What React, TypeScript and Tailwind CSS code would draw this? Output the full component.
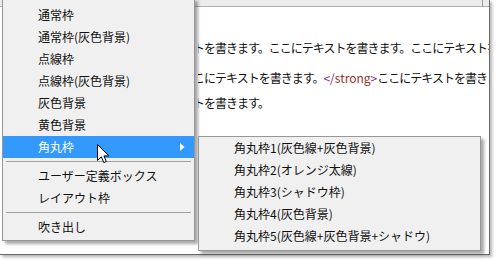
import React from "react";

const mainItems = [
  "通常枠",
  "通常枠(灰色背景)",
  "点線枠",
  "点線枠(灰色背景)",
  "灰色背景",
  "黄色背景",
];

const subItems = [
  "角丸枠1(灰色線+灰色背景)",
  "角丸枠2(オレンジ太線)",
  "角丸枠3(シャドウ枠)",
  "角丸枠4(灰色背景)",
  "角丸枠5(灰色線+灰色背景+シャドウ)",
];

const menuFont = { fontFamily: '"Noto Sans CJK JP", "Noto Sans", sans-serif' };

function Separator() {
  return (
    <div className="flex h-[7px] items-center px-[3px]">
      <div className="h-px w-full bg-[#a0a0a0]" />
    </div>
  );
}

function Cursor() {
  return (
    <svg width="13" height="20" viewBox="0 0 13 20" className="absolute left-[97px] top-[144px]">
      <path
        d="M0.5 0.5 L0.5 16.5 L4.3 12.8 L6.8 18.6 L9.3 17.5 L6.9 11.9 L12 11.9 Z"
        fill="#fff"
        stroke="#000"
        strokeWidth="1"
        strokeLinejoin="round"
      />
    </svg>
  );
}

export default function App() {
  return (
    <div className="relative h-[260px] w-[496px] overflow-hidden bg-white" style={menuFont}>
      {/* underlying window */}
      <div className="flex h-[255px] w-[490px] flex-col border-b border-r border-[#6a6a6a] shadow-[2px_2px_3px_rgba(0,0,0,0.3)]">
        <div className="flex h-[7px] justify-end border-b border-[#b0b0b0] bg-[#ececec]">
          <div className="mr-[6px] h-full w-px bg-[#9a9a9a]" />
        </div>
        <div className="flex flex-1">
          <div className="w-[198px] bg-white" />
          <div className="flex-1 overflow-hidden bg-white pt-[28px] text-[12px] leading-[25px] tracking-[-1px] text-[#111]">
            <div className="ml-[-5px] whitespace-nowrap">
              トを書きます。ここにテキストを書きます。ここにテキストを書きます。
            </div>
            <div className="ml-[-5px] mt-[5px] whitespace-nowrap">
              こにテキストを書きます。
              <span className="tracking-normal">
                <span className="text-[#7a2c8c]">&lt;/</span>
                <span className="text-[#993322]">strong</span>
                <span className="text-[#7a2c8c]">&gt;</span>
              </span>
              ここにテキストを書きます。
            </div>
            <div className="ml-[-5px] whitespace-nowrap">トを書きます。</div>
          </div>
        </div>
      </div>

      {/* main context menu */}
      <div className="absolute left-[2px] top-[-2px] w-[193px] border border-[#979797] bg-[#f0f0f0] pb-[2px] pt-[5px] text-[12px] text-[#111] shadow-[3px_3px_3px_rgba(0,0,0,0.35)]">
        {mainItems.map((t) => (
          <div key={t} className="flex h-[22px] items-center pl-[35px]">
            {t}
          </div>
        ))}
        <div className="flex h-[22px] items-center justify-between bg-[#3399ff] pl-[35px] pr-[9px] text-white">
          <span>角丸枠</span>
          <svg width="5" height="8" viewBox="0 0 5 8">
            <path d="M0 0 L4.5 4 L0 8 Z" fill="#fff" />
          </svg>
        </div>
        <Separator />
        <div className="flex h-[22px] items-center pl-[35px]">ユーザー定義ボックス</div>
        <div className="flex h-[22px] items-center pl-[35px]">レイアウト枠</div>
        <Separator />
        <div className="flex h-[22px] items-center pl-[35px]">吹き出し</div>
      </div>

      {/* submenu */}
      <div className="absolute left-[198px] top-[136px] w-[283px] border border-[#979797] bg-[#f0f0f0] pb-[3px] text-[12px] text-[#111] shadow-[3px_3px_3px_rgba(0,0,0,0.35)]">
        {subItems.map((t) => (
          <div key={t} className="flex h-[22px] items-center pl-[35px]">
            {t}
          </div>
        ))}
      </div>

      <Cursor />
    </div>
  );
}
